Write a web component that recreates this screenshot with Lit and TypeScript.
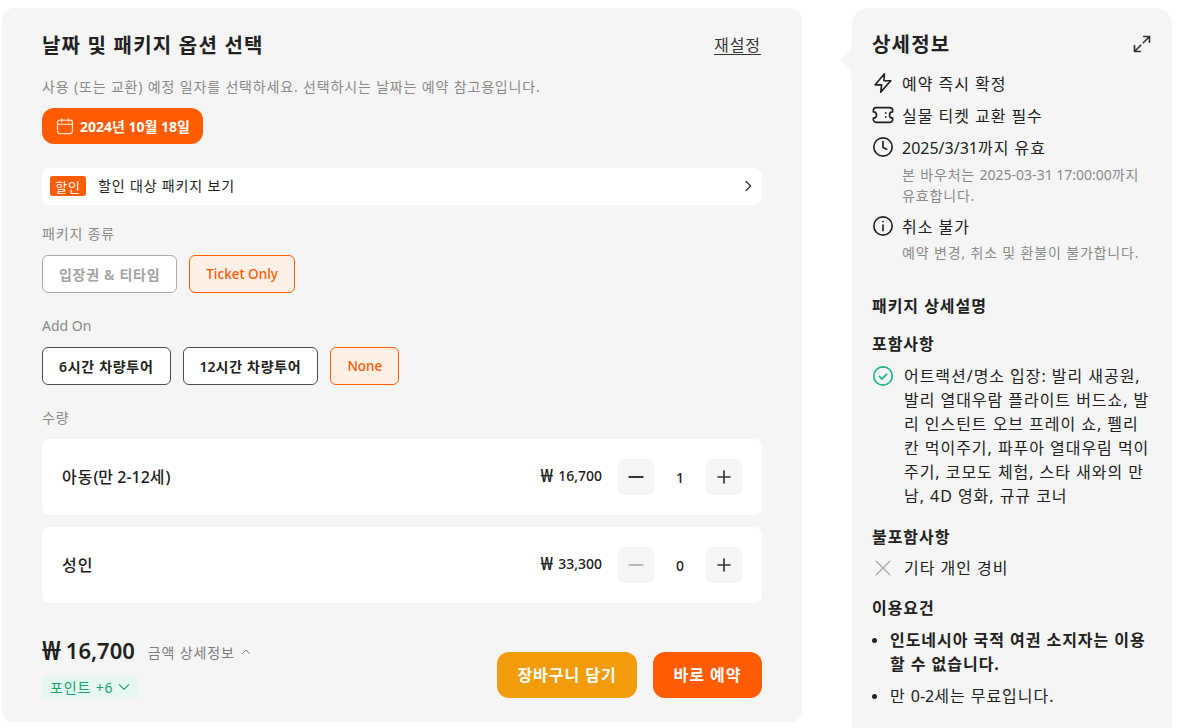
import { LitElement, html, css, svg } from "lit";
import { customElement } from "lit/decorators.js";

const ic = (size: number, body: unknown, sw = 2, color = "currentColor") => html`<svg width=${size} height=${size} viewBox="0 0 24 24" fill="none" stroke=${color} stroke-width=${sw} stroke-linecap="round" stroke-linejoin="round">${body}</svg>`;

const bolt = svg`<path d="M13.5 2 3.5 14h7L9.5 22l11-12.5h-7.5L13.5 2z"/>`;
const ticket = svg`<path d="M4.5 4h15a3 3 0 0 1 3 3v1.6a3.4 3.4 0 0 0 0 6.8V17a3 3 0 0 1-3 3h-15a3 3 0 0 1-3-3v-1.6a3.4 3.4 0 0 0 0-6.8V7a3 3 0 0 1 3-3z"/><path d="M15 9.6v.4M15 14v.4"/>`;
const clock = svg`<circle cx="12" cy="12" r="10"/><path d="M12 6v6.5l4 2"/>`;
const info = svg`<circle cx="12" cy="12" r="10"/><path d="M12 11v6M12 7.2v.1"/>`;
const check = svg`<circle cx="12" cy="12" r="10"/><path d="m8 12.5 3 2.8 5-5.3"/>`;
const cross = svg`<path d="m4.5 4.5 15 15M19.5 4.5l-15 15"/>`;
const expand = svg`<path d="M14 3h7v7M21 3l-7.5 7.5M10 21H3v-7M3 21l7.5-7.5"/>`;
const calendar = svg`<rect x="3" y="5" width="18" height="16" rx="3"/><path d="M3 10h18M8 3v4M16 3v4"/>`;
const chevR = svg`<path d="m9 5 7 7-7 7"/>`;
const chevU = svg`<path d="m5 15 7-7 7 7"/>`;
const chevD = svg`<path d="m4 8 8 8 8-8"/>`;
const minus = svg`<path d="M4 12h16"/>`;
const plus = svg`<path d="M12 4v16M4 12h16"/>`;

@customElement("app-root")
export class AppRoot extends LitElement {
  static styles = css`
    * { letter-spacing: .06em; }
    .chip { letter-spacing: .05em; }
    .l, .l * { letter-spacing: 0; }
    :host {
      display: flex;
      align-items: flex-start;
      gap: 50px;
      height: 728px;
      box-sizing: border-box;
      overflow: hidden;
      padding: 8px 0 0 2px;
      background: #fff;
      color: #212121;
      font-family: "Noto Sans", "Noto Sans CJK KR", sans-serif;
      font-size: 14px;
    }
    svg { display: block; flex: none; }
    .main {
      width: 800px;
      height: 714px;
      box-sizing: border-box;
      flex: none;
      background: #f5f5f5;
      border-radius: 12px;
      padding: 25px 40px 24px;
    }
    .head { display: flex; justify-content: space-between; align-items: center; height: 24px; }
    .title { font-size: 20px; font-weight: 700; line-height: 24px; position: relative; top: 1px; }
    .reset { font-size: 16px; color: #333; text-decoration: underline; text-underline-offset: 3px; margin: 0 1px 2px 0; }
    .desc { margin-top: 20px; line-height: 20px; font-size: 14px; color: #8a8a8a; }
    .date {
      margin-top: 11px; width: 161px; height: 36px; box-sizing: border-box;
      display: flex; align-items: center; gap: 5px; padding-left: 13px;
      background: #ff5b00; color: #fff; border-radius: 12px; font-weight: 700; font-size: 14px;
    }
    .date svg { opacity: .8; }
    .promo {
      margin-top: 24px; height: 37px; box-sizing: border-box;
      display: flex; align-items: center; gap: 12px; padding: 0 6px 1px 8px;
      background: #fff; border-radius: 8px; font-size: 14px;
    }
    .promo .txt { flex: 1; margin-bottom: 2px; }
    .tag {
      width: 36px; height: 20px; display: flex; align-items: center; justify-content: center;
      background: #ff5b00; color: #fff; border-radius: 3px; font-size: 13px;
    }
    .label { line-height: 20px; font-size: 14px; color: #8a8a8a; }
    .l1 { margin-top: 19px; }
    .l2 { margin-top: 23px; }
    .l3 { margin-top: 23px; }
    .chips { display: flex; gap: 12px; margin-top: 11px; }
    .chips.c2 { margin-top: 11px; }
    .chip {
      height: 38px; box-sizing: border-box; padding: 0 16px;
      display: flex; align-items: center; border-radius: 6px; border: 1px solid #4f4f4f;
      background: #fff; font-size: 14px; font-weight: 600;
    }
    .chip.off { border-color: #aaa; color: #a3a3a3; }
    .chip.on { border-color: #ff5b00; background: #fff0e6; color: #ff5b00; font-size: 13.5px; font-weight: 500; }
    .cards { display: flex; flex-direction: column; gap: 12px; margin-top: 11px; }
    .card {
      height: 76px; box-sizing: border-box; background: #fff; border-radius: 8px;
      display: flex; align-items: center; padding: 0 20px;
    }
    .card .name { flex: 1; font-size: 16px; font-weight: 500; margin-bottom: 2px; }
    .card .price { font-size: 14px; font-weight: 500; margin-right: 16px; margin-top: -4px; display: flex; align-items: center; gap: 5px; }
    .won { font-size: 1.3em; line-height: 1; letter-spacing: 0; }
    .sum .won { font-size: 1.2em; }
    .step {
      width: 36px; height: 36px; border-radius: 6px; background: #f5f5f5; color: #333;
      display: flex; align-items: center; justify-content: center;
    }
    .step.dis { color: #bbb; }
    .qty { width: 52px; text-align: center; font-size: 14px; font-weight: 500; }
    .foot { margin-top: 49px; display: flex; justify-content: space-between; align-items: flex-start; }
    .priceRow { display: flex; align-items: center; gap: 13px; height: 30px; margin-top: -17px; }
    .sum { font-size: 22px; font-weight: 600; line-height: 30px; display: flex; align-items: center; gap: 5px; }
    .more { display: flex; align-items: center; gap: 5px; font-size: 14px; color: #7d7d7d; margin-top: 3px; }
    .points {
      margin-top: 10px; width: 96px; height: 24px; box-sizing: border-box; padding-left: 8px;
      display: flex; align-items: center; gap: 4px; background: #e6f6f0; color: #12a26e;
      border-radius: 6px; font-size: 14px;
    }
    .btns { display: flex; gap: 16px; }
    .btn {
      height: 46px; box-sizing: border-box; padding-bottom: 2px; border-radius: 12px; display: flex; align-items: center; justify-content: center;
      color: #fff; font-size: 16px; font-weight: 700;
    }
    .btn.cart { width: 140px; background: #f39c0a; }
    .btn.buy { width: 109px; background: #ff5b00; }

    .side {
      position: relative; width: 320px; height: 760px; flex: none; box-sizing: border-box;
      background: #f5f5f5; border-radius: 16px; padding: 20px;
    }
    .notch { position: absolute; left: -12px; top: 32px; }
    .sideHead { display: flex; justify-content: space-between; align-items: center; height: 32px; }
    .sideHead .title { font-size: 20px; }
    .row { display: flex; align-items: center; gap: 8px; height: 32px; font-size: 16px; }
    .rows { margin-top: 7px; }
    .sub { margin: 1px 0 0 30px; font-size: 14px; line-height: 21px; color: #8a8a8a; width: 250px; }
    .sub.s2 { margin-top: 0; padding-bottom: 1px; }
    .row.r4 { margin-top: 4px; }
    h3 { margin: 0; font-size: 16px; font-weight: 700; line-height: 22px; }
    .h1 { margin-top: 31px; }
    .h2 { margin-top: 16px; }
    .h3 { margin-top: 18px; }
    .h4 { margin-top: 17px; }
    .li { display: flex; gap: 10px; margin-top: 9px; font-size: 16px; line-height: 24px; }
    .li.x { margin-top: 8px; }
    .li svg { margin-top: 1px; }
    .li .t { flex: 1; }
    .bul { margin: 9px 0 0; padding: 0; list-style: none; font-size: 16px; line-height: 24px; }
    .bul li { position: relative; padding-left: 18px; margin-top: 8px; }
    .bul li::before {
      content: ""; position: absolute; left: 0; top: 10px; width: 5px; height: 5px; border-radius: 50%; background: #212121;
    }
    .bul b { font-weight: 700; }
  `;

  render() {
    return html`
      <section class="main">
        <div class="head"><div class="title">날짜 및 패키지 옵션 선택</div><div class="reset">재설정</div></div>
        <div class="desc">사용 (또는 교환) 예정 일자를 선택하세요. 선택하시는 날짜는 예약 참고용입니다.</div>
        <div class="date l">${ic(20, calendar, 1.5)}2024년 10월 18일</div>
        <div class="promo"><span class="tag">할인</span><span class="txt">할인 대상 패키지 보기</span>${ic(16, chevR, 1.8)}</div>
        <div class="label l1">패키지 종류</div>
        <div class="chips"><div class="chip off">입장권 &amp; 티타임</div><div class="chip on l">Ticket Only</div></div>
        <div class="label l2 l">Add On</div>
        <div class="chips c2"><div class="chip">6시간 차량투어</div><div class="chip"><span class="l">12</span>시간 차량투어</div><div class="chip on l">None</div></div>
        <div class="label l3">수량</div>
        <div class="cards">
          <div class="card"><div class="name">아동<span class="l">(만 2-12</span>세<span class="l">)</span></div><div class="price l"><span class="won">₩</span>16,700</div>
            <div class="step">${ic(20, minus, 2.4)}</div><div class="qty l">1</div><div class="step">${ic(18, plus, 2.2)}</div></div>
          <div class="card"><div class="name">성인</div><div class="price l"><span class="won">₩</span>33,300</div>
            <div class="step dis">${ic(20, minus, 2.4)}</div><div class="qty l">0</div><div class="step">${ic(18, plus, 2.2)}</div></div>
        </div>
        <div class="foot">
          <div class="left">
            <div class="priceRow"><div class="sum l"><span class="won">₩</span>16,700</div><div class="more">금액 상세정보 ${ic(12, chevU, 2)}</div></div>
            <div class="points">포인트 +6 ${ic(14, chevD, 1.8)}</div>
          </div>
          <div class="btns"><div class="btn cart">장바구니 담기</div><div class="btn buy">바로 예약</div></div>
        </div>
      </section>
      <aside class="side">
        <svg class="notch" width="12" height="40" viewBox="0 0 12 40"><path d="M12 0C12 10 6 14 1.5 18.5Q0 20 1.5 21.5C6 26 12 30 12 40Z" fill="#f5f5f5"/></svg>
        <div class="sideHead"><div class="title">상세정보</div>${ic(20, expand, 2, "#333")}</div>
        <div class="rows">
          <div class="row">${ic(22, bolt, 1.8)}<span>예약 즉시 확정</span></div>
          <div class="row">${ic(22, ticket, 1.8)}<span>실물 티켓 교환 필수</span></div>
          <div class="row">${ic(22, clock, 1.8)}<span><span class="l">2025/3/31</span>까지 유효</span></div>
          <div class="sub">본 바우처는 <span class="l">2025-03-31 17:00:00</span>까지 <span>유효합니다.</span></div>
          <div class="row r4">${ic(22, info, 1.8)}<span>취소 불가</span></div>
          <div class="sub s2">예약 변경, 취소 및 환불이 불가합니다.</div>
        </div>
        <h3 class="h1">패키지 상세설명</h3>
        <h3 class="h2">포함사항</h3>
        <div class="li">${ic(22, check, 1.8, "#16b57f")}<div class="t">어트랙션/명소 입장: 발리 새공원, 발리 열대우람 플라이트 버드쇼, 발리 인스틴트 오브 프레이 쇼, 펠리칸 먹이주기, 파푸아 열대우림 먹이주기, 코모도 체험, 스타 새와의 만남, 4D 영화, 규규 코너</div></div>
        <h3 class="h3">불포함사항</h3>
        <div class="li x">${ic(22, cross, 1.5, "#a3a3a3")}<div class="t">기타 개인 경비</div></div>
        <h3 class="h4">이용요건</h3>
        <ul class="bul">
          <li><b>인도네시아 국적 여권 소지자는 이용할 수 없습니다.</b></li>
          <li>만 <span class="l">0-2</span>세는 무료입니다.</li>
        </ul>
      </aside>
    `;
  }
}
